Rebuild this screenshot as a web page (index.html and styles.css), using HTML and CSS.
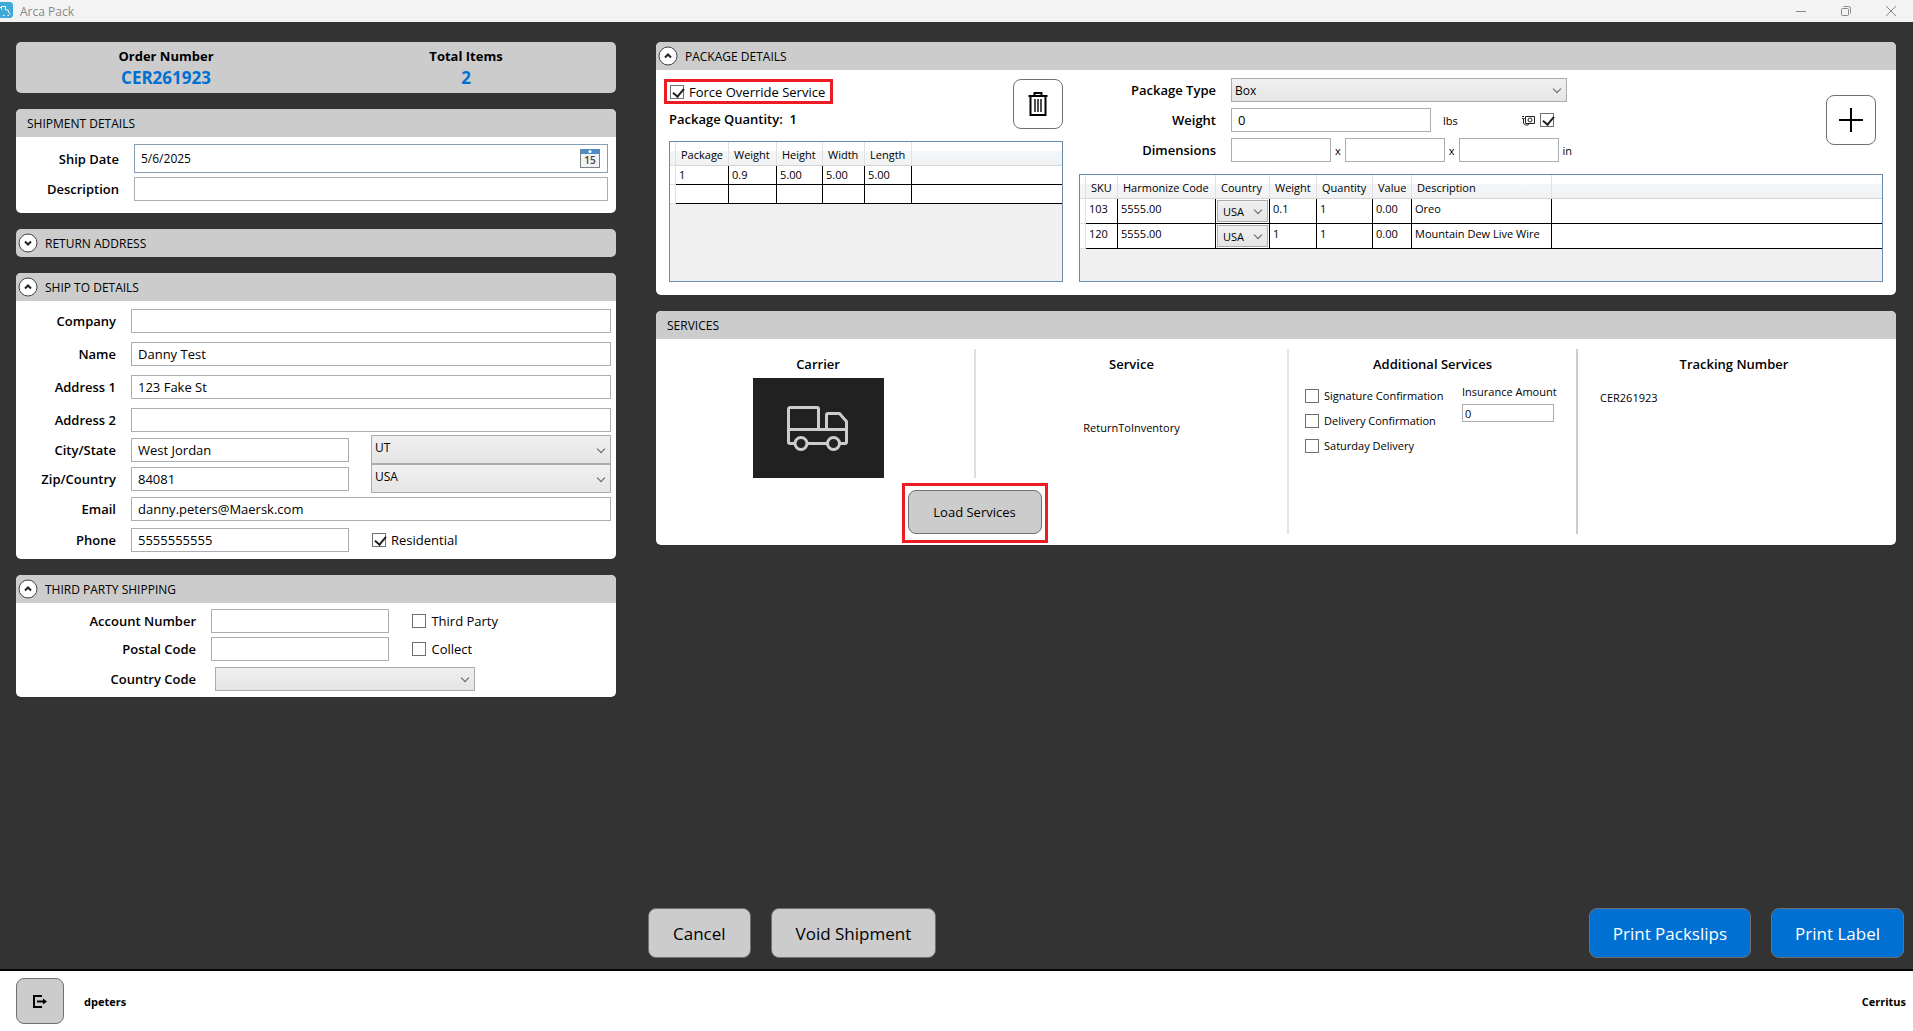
FILE: index.html
```html
<!DOCTYPE html>
<html lang="en">
<head>
  <meta charset="UTF-8" />
  <meta name="viewport" content="width=device-width, initial-scale=1.0"/>
  <title>Arca Pack</title>
  <link rel="stylesheet" href="styles.css">
</head>
<body>
  <!-- Window title bar -->
  <header class="titlebar">
    <svg class="app-icon" viewBox="0 0 13 16" width="13" height="16">
      <path d="M0 0h11l2 2v12l-2 2H0z" fill="#3fa9d8"/>
      <path d="M0 5.500h1.500M1.500 7.500v-3h4v2.500M5 7.500l3.500 1M8.500 8.500v1.500l2 2.500" fill="none" stroke="#fff"/>
      <path d="M3 13.500h1.500M7.500 13.500h1.500" stroke="#fff"/>
    </svg>
    <span class="titlebar-name">Arca Pack</span>
    <button class="win-btn" aria-label="Minimize"><svg viewBox="0 0 12 12" width="12" height="12"><path d="M1 6.500h10"/></svg></button>
    <button class="win-btn" aria-label="Restore"><svg viewBox="0 0 12 12" width="12" height="12"><rect x="1.500" y="3.500" width="7" height="7" rx="1"/><path d="M3.500 1.500h5a2 2 0 0 1 2 2v5"/></svg></button>
    <button class="win-btn" aria-label="Close"><svg viewBox="0 0 12 12" width="12" height="12"><path d="M1 1l10 10M11 1L1 11"/></svg></button>
  </header>

  <main>
    <div class="columns">
      <!-- Left column -->
      <div class="column">
        <section class="summary">
          <div>
            <h2>Order Number</h2>
            <p>CER261923</p>
          </div>
          <div>
            <h2>Total Items</h2>
            <p>2</p>
          </div>
        </section>

        <section class="panel">
          <h2 class="panel-head">SHIPMENT DETAILS</h2>
          <div class="panel-body shipment">
            <div class="field">
              <label for="shipDate">Ship Date</label>
              <div class="date-box">
                <input type="text" id="shipDate" value="5/6/2025">
                <button aria-label="Open calendar">
                  <svg viewBox="0 0 20 19" width="20" height="19">
                    <rect x=".5" y=".5" width="19" height="18" fill="#f1f2f4" stroke="#7c7f85"/>
                    <rect x="1" y="0" width="18" height="5" fill="#4c8cc4"/>
                    <circle cx="10" cy="2.500" r="1.500" fill="#fff"/>
                    <text x="10" y="15" text-anchor="middle" class="cal-day">15</text>
                  </svg>
                </button>
              </div>
            </div>
            <div class="field">
              <label for="description">Description</label>
              <input type="text" id="description">
            </div>
          </div>
        </section>

        <section class="panel">
          <h2 class="panel-head">
            <button class="toggle" aria-label="Expand"><svg viewBox="0 0 20 20" width="20" height="20"><circle cx="10" cy="10" r="9"/><path d="M7 8.500l3 3 3-3"/></svg></button>
            RETURN ADDRESS
          </h2>
        </section>

        <section class="panel">
          <h2 class="panel-head">
            <button class="toggle" aria-label="Collapse"><svg viewBox="0 0 20 20" width="20" height="20"><circle cx="10" cy="10" r="9"/><path d="M7 11.500l3-3 3 3"/></svg></button>
            SHIP TO DETAILS
          </h2>
          <div class="panel-body ship-to">
            <div class="rows">
              <div class="field"><label for="company">Company</label><input type="text" id="company"></div>
              <div class="field"><label for="name">Name</label><input type="text" id="name" value="Danny Test"></div>
              <div class="field"><label for="address1">Address 1</label><input type="text" id="address1" value="123 Fake St"></div>
              <div class="field"><label for="address2">Address 2</label><input type="text" id="address2"></div>
            </div>
            <div class="rows-tight">
              <div class="field">
                <label for="city">City/State</label>
                <div class="split">
                  <input type="text" id="city" value="West Jordan">
                  <div class="select"><select aria-label="State"><option>UT</option></select></div>
                </div>
              </div>
              <div class="field">
                <label for="zip">Zip/Country</label>
                <div class="split">
                  <input type="text" id="zip" value="84081">
                  <div class="select"><select aria-label="Country"><option>USA</option></select></div>
                </div>
              </div>
            </div>
            <div class="rows-contact">
              <div class="field"><label for="email">Email</label><input type="text" id="email" value="danny.peters@Maersk.com"></div>
              <div class="field">
                <label for="phone">Phone</label>
                <div class="split">
                  <input type="text" id="phone" value="5555555555">
                  <label class="check"><input type="checkbox" checked> Residential</label>
                </div>
              </div>
            </div>
          </div>
        </section>

        <section class="panel">
          <h2 class="panel-head">
            <button class="toggle" aria-label="Collapse"><svg viewBox="0 0 20 20" width="20" height="20"><circle cx="10" cy="10" r="9"/><path d="M7 11.500l3-3 3 3"/></svg></button>
            THIRD PARTY SHIPPING
          </h2>
          <div class="panel-body third-party">
            <div class="field">
              <label for="account">Account Number</label>
              <div class="split">
                <input type="text" id="account">
                <label class="check"><input type="checkbox"> Third Party</label>
              </div>
            </div>
            <div class="field">
              <label for="postal">Postal Code</label>
              <div class="split">
                <input type="text" id="postal">
                <label class="check"><input type="checkbox"> Collect</label>
              </div>
            </div>
            <div class="field">
              <label for="countryCode">Country Code</label>
              <div class="select country-code"><select id="countryCode"><option></option></select></div>
            </div>
          </div>
        </section>
      </div>

      <!-- Right column -->
      <div class="column">
        <section class="panel">
          <h2 class="panel-head">
            <button class="toggle" aria-label="Collapse"><svg viewBox="0 0 20 20" width="20" height="20"><circle cx="10" cy="10" r="9"/><path d="M7 11.500l3-3 3 3"/></svg></button>
            PACKAGE DETAILS
          </h2>
          <div class="panel-body package">
            <div class="package-list">
              <div class="package-top">
                <div>
                  <label class="check highlight"><input type="checkbox" checked> Force Override Service</label>
                  <p class="quantity">Package Quantity:&nbsp; 1</p>
                </div>
                <button class="icon-btn" aria-label="Delete package">
                  <svg viewBox="0 0 22 26" width="22" height="26">
                    <path d="M1.500 5h19M7.500 5V2h7v3M3.500 5v19h15V5" fill="none" stroke="#000" stroke-width="2"/>
                    <path d="M8 8v13M11 8v13M14 8v13" fill="none" stroke="#000" stroke-width="1.400"/>
                  </svg>
                </button>
              </div>
              <div class="grid-box">
                <table>
                  <colgroup><col class="w6"><col class="w53"><col class="w48"><col class="w46"><col class="w42"><col class="w47"><col></colgroup>
                  <thead>
                    <tr><th class="edge"></th><th>Package</th><th>Weight</th><th>Height</th><th>Width</th><th>Length</th><th></th></tr>
                  </thead>
                  <tbody>
                    <tr><td class="edge"></td><td>1</td><td>0.9</td><td>5.00</td><td>5.00</td><td>5.00</td><td></td></tr>
                    <tr><td class="edge"></td><td></td><td></td><td></td><td></td><td></td><td></td></tr>
                  </tbody>
                </table>
              </div>
            </div>

            <div class="package-form">
              <div class="package-entry">
                <div class="entry-rows">
                  <label for="packageType">Package Type</label>
                  <div class="select package-type"><select id="packageType"><option>Box</option></select></div>
                  <label for="weight">Weight</label>
                  <div class="weight-row">
                    <input type="text" id="weight" value="0">
                    <span class="lbs">lbs</span>
                    <svg viewBox="0 0 13 11" width="13" height="11">
                      <path d="M3.500 1.500h9v7h-9zM0 1.500h2M0 3.500h2.500M1.500 4v4.500l2 1.500h2.500l1-1.500" fill="none" stroke="#222"/>
                      <circle cx="8" cy="5" r="2" fill="none" stroke="#222"/>
                    </svg>
                    <input type="checkbox" checked aria-label="Use scale weight">
                  </div>
                  <label for="dimLength">Dimensions</label>
                  <div class="dim-row">
                    <input type="text" id="dimLength">
                    <span>x</span>
                    <input type="text" aria-label="Width">
                    <span>x</span>
                    <input type="text" aria-label="Height">
                    <span>in</span>
                  </div>
                </div>
                <button class="icon-btn" aria-label="Add package">
                  <svg viewBox="0 0 24 24" width="24" height="24"><path d="M12 0v24M0 12h24" stroke="#000" stroke-width="2"/></svg>
                </button>
              </div>
              <div class="grid-box items">
                <table>
                  <colgroup><col class="w6"><col class="w32"><col class="w98"><col class="w54"><col class="w47"><col class="w56"><col class="w39"><col class="w140"><col></colgroup>
                  <thead>
                    <tr><th class="edge"></th><th>SKU</th><th>Harmonize Code</th><th>Country</th><th>Weight</th><th>Quantity</th><th>Value</th><th>Description</th><th></th></tr>
                  </thead>
                  <tbody>
                    <tr><td class="edge"></td><td>103</td><td>5555.00</td><td class="has-select"><div class="select"><select aria-label="Country for 103"><option>USA</option></select></div></td><td>0.1</td><td>1</td><td>0.00</td><td>Oreo</td><td></td></tr>
                    <tr><td class="edge"></td><td>120</td><td>5555.00</td><td class="has-select"><div class="select"><select aria-label="Country for 120"><option>USA</option></select></div></td><td>1</td><td>1</td><td>0.00</td><td>Mountain Dew Live Wire</td><td></td></tr>
                  </tbody>
                </table>
              </div>
            </div>
          </div>
        </section>

        <section class="panel">
          <h2 class="panel-head">SERVICES</h2>
          <div class="panel-body services">
            <div class="service-col carrier-col">
              <h3>Carrier</h3>
              <div class="carrier">
                <svg viewBox="0 0 62 46" width="62" height="46">
                  <path d="M7 38.500H3a1.500 1.500 0 0 1-1.500-1.500V4A1.500 1.500 0 0 1 3 2.500h27A1.500 1.500 0 0 1 31.500 4v20.500M1.500 24.500h58M20 38.500h20M39.500 24.500V10A1.500 1.500 0 0 1 41 8.500h11.500l7 8V37a1.500 1.500 0 0 1-1.500 1.500h-5"/>
                  <circle cx="14" cy="38.500" r="6"/>
                  <circle cx="46.500" cy="38.500" r="6"/>
                </svg>
              </div>
            </div>
            <div class="service-col no-rule">
              <h3>Service</h3>
              <p class="service-name">ReturnToInventory</p>
            </div>
            <div class="load-row">
              <div class="load-box"><button class="btn-load">Load Services</button></div>
            </div>
            <div class="service-col tall">
              <h3>Additional Services</h3>
              <div class="extras">
                <div class="extra-checks">
                  <label class="check"><input type="checkbox"> Signature Confirmation</label>
                  <label class="check"><input type="checkbox"> Delivery Confirmation</label>
                  <label class="check"><input type="checkbox"> Saturday Delivery</label>
                </div>
                <div class="insurance">
                  <label for="insurance">Insurance Amount</label>
                  <input type="text" id="insurance" value="0">
                </div>
              </div>
            </div>
            <div class="service-col tall no-rule tracking-col">
              <h3>Tracking Number</h3>
              <p class="tracking">CER261923</p>
            </div>
          </div>
        </section>
      </div>
    </div>

    <div class="actions">
      <div class="action-group">
        <button class="btn">Cancel</button>
        <button class="btn">Void Shipment</button>
      </div>
      <div class="action-group">
        <button class="btn btn-blue">Print Packslips</button>
        <button class="btn btn-blue">Print Label</button>
      </div>
    </div>
  </main>

  <footer>
    <button class="logout" aria-label="Log out">
      <svg viewBox="0 0 14 13" width="14" height="13">
        <path d="M9 1H1v11h8M4 6.500h8" fill="none" stroke="#000" stroke-width="2"/>
        <path d="M10 3.500l4 3-4 3z"/>
      </svg>
    </button>
    <span>dpeters</span>
    <span class="site">Cerritus</span>
  </footer>
</body>
</html>
```
FILE: styles.css
```css
* {
  box-sizing: border-box;
}

body {
  margin: 0;
  min-height: 100vh;
  display: flex;
  flex-direction: column;
  font-family: "Open Sans", "Noto Sans", sans-serif;
  font-size: 13px;
  color: #000;
  background: #333;
}

h2, h3, p {
  margin: 0;
}

button, input, select {
  font-family: inherit;
  font-size: inherit;
  color: inherit;
}

button {
  padding: 0;
  display: flex;
  align-items: center;
  justify-content: center;
}

/* Title bar */
.titlebar {
  height: 22px;
  display: flex;
  align-items: center;
  background: #f3f3f3;
  padding-right: 16px;
}

.app-icon {
  margin-bottom: 2px;
}

.titlebar-name {
  flex: 1;
  padding-left: 7px;
  font-size: 12px;
  color: #888;
}

.win-btn {
  width: 12px;
  height: 18px;
  margin-left: 33px;
  border: none;
  background: none;
}

.win-btn svg {
  fill: none;
  stroke: #888;
  stroke-width: 1;
}

/* Page columns */
main {
  flex: 1;
  display: flex;
  flex-direction: column;
  justify-content: space-between;
  padding-top: 20px;
  border-bottom: 2px solid #000;
}

.columns {
  display: grid;
  grid-template-columns: 600fr 1240fr;
  gap: 40px;
  padding: 0 17px 0 16px;
}

.column {
  display: flex;
  flex-direction: column;
  gap: 16px;
  min-width: 0;
}

.summary {
  display: grid;
  grid-template-columns: 1fr 1fr;
  height: 51px;
  padding-top: 4px;
  background: #ccc;
  border-radius: 5px;
  text-align: center;
}

.summary h2 {
  font-size: 13px;
  line-height: 20px;
}

.summary p {
  font-size: 17px;
  font-weight: 700;
  line-height: 23px;
  color: #0070d2;
}

.panel {
  background: #fff;
  border-radius: 5px;
  overflow: hidden;
}

.panel-head {
  display: flex;
  align-items: center;
  height: 28px;
  padding-left: 11px;
  background: #ccc;
  font-size: 12px;
  font-weight: 400;
}

.panel-head:has(.toggle) {
  padding-left: 2px;
}

.toggle {
  margin-right: 7px;
  border: none;
  background: none;
}

.toggle circle {
  fill: #fff;
  stroke: #444;
}

.toggle path {
  fill: none;
  stroke: #222;
  stroke-width: 2;
}

/* Form controls */
input[type="text"] {
  width: 100%;
  min-width: 0;
  height: 24px;
  padding: 0 6px;
  border: 1px solid #abadb3;
  background: #fff;
}

input[type="checkbox"] {
  appearance: none;
  flex: none;
  width: 14px;
  height: 14px;
  margin: 0 5px 0 0;
  border: 1px solid #707070;
  background: #fff;
}

input[type="checkbox"]:checked::after {
  content: "";
  display: block;
  width: 5px;
  height: 9px;
  margin-left: 4px;
  border: solid #212121;
  border-width: 0 2px 2px 0;
  transform: rotate(40deg);
}

.check {
  display: flex;
  align-items: center;
}

.select {
  position: relative;
  min-width: 0;
}

.select::after {
  content: "";
  position: absolute;
  right: 7px;
  top: 50%;
  width: 5px;
  height: 5px;
  margin-top: -4px;
  border: solid #606060;
  border-width: 0 1px 1px 0;
  transform: rotate(45deg);
  pointer-events: none;
}

select {
  appearance: none;
  display: block;
  width: 100%;
  height: 24px;
  padding: 0 3px;
  border: 1px solid #acacac;
  border-radius: 0;
  background: linear-gradient(#f0f0f0, #e5e5e5);
  font-size: 12px;
}

.field {
  display: grid;
  grid-template-columns: 100px 1fr;
  column-gap: 15px;
  align-items: center;
}

.field > label,
.entry-rows > label {
  font-weight: 600;
  text-align: right;
}

.split {
  display: grid;
  grid-template-columns: 218fr 240fr;
  column-gap: 22px;
  align-items: center;
}

.split .check {
  padding-left: 1px;
}

/* Shipment details */
.shipment {
  display: grid;
  gap: 4px;
  padding: 7px 8px 12px 0;
}

.shipment .field {
  grid-template-columns: 103px 1fr;
}

.date-box {
  display: flex;
  align-items: center;
  height: 29px;
  padding-right: 7px;
  border: 1px solid #8a9db0;
}

.date-box input[type="text"] {
  border: none;
  font-size: 12px;
}

.date-box button {
  border: none;
  background: none;
}

.cal-day {
  font-size: 10px;
  font-weight: 600;
  fill: #444;
}

/* Ship to details */
.ship-to {
  padding: 8px 5px 7px 0;
}

.rows {
  display: grid;
  gap: 9px;
}

.rows-tight {
  margin: 3px 0 4px;
}

.rows-contact {
  display: grid;
  gap: 7px;
}

.rows-tight select {
  height: 29px;
  padding-bottom: 5px;
}

/* Third party shipping */
.third-party {
  display: grid;
  gap: 4px;
  padding: 6px 0 6px;
}

.third-party .field {
  grid-template-columns: 180px 1fr;
}

.third-party .split {
  grid-template-columns: 178fr 204fr;
}

.country-code {
  width: 260px;
  margin-left: 4px;
}

.third-party .field:last-child {
  margin-top: 2px;
}

/* Package details */
.package {
  display: grid;
  grid-template-columns: 394fr 804fr;
  gap: 16px;
  padding: 8px 13px 13px;
}

.package-list,
.package-form {
  display: flex;
  flex-direction: column;
  gap: 12px;
  min-width: 0;
}

.package-top {
  display: flex;
  justify-content: space-between;
  padding-top: 1px;
}

.highlight {
  width: max-content;
  height: 25px;
  margin-left: -5px;
  padding: 0 5px 0 3px;
  border: 3px solid #ed1c24;
}

.quantity {
  padding-top: 6px;
  font-weight: 600;
}

.icon-btn {
  width: 50px;
  height: 50px;
  border: 1px solid #707070;
  border-radius: 8px;
  background: #fff;
}

.package-entry {
  display: flex;
  justify-content: space-between;
  align-items: center;
  padding-right: 7px;
}

.entry-rows {
  display: grid;
  grid-template-columns: 137px auto;
  gap: 6px 15px;
  align-items: center;
}

.package-type {
  width: 336px;
}

.weight-row,
.dim-row {
  display: flex;
  align-items: center;
  font-size: 11px;
}

.weight-row input[type="text"] {
  width: 200px;
  font-size: 13px;
}

.weight-row input[type="checkbox"] {
  margin-left: 5px;
}

.lbs {
  width: 91px;
  padding-left: 12px;
}

.dim-row {
  gap: 4px;
}

.dim-row input[type="text"] {
  width: 100px;
}

/* Data grids */
.grid-box {
  flex: 1;
  border: 1px solid #688caf;
  background: #f0f0f0;
}

.items {
  flex: none;
  height: 108px;
}

table {
  width: 100%;
  table-layout: fixed;
  border-spacing: 0;
  font-size: 11px;
}

th {
  height: 24px;
  padding: 1px 0 0 5px;
  border-right: 1px solid #dfe1e3;
  border-bottom: 1px solid #d5d5d5;
  background: linear-gradient(#fff 40%, #f5f6f8 40%, #f0f2f4);
  font-weight: 400;
  text-align: left;
  white-space: nowrap;
}

td {
  height: 19px;
  padding: 0 0 1px 3px;
  border-right: 1px solid #000;
  border-bottom: 1px solid #000;
  background: #fff;
  white-space: nowrap;
}

th:last-child,
td:last-child {
  border-right: none;
}

.edge {
  padding: 0;
  border-color: #e0e0e0;
}

.items td {
  height: 25px;
  padding-bottom: 5px;
}

.items .has-select {
  padding: 1px;
}

.has-select select {
  height: 22px;
  padding: 0 5px;
  font-size: 11px;
}

.w6 { width: 6px; }
.w32 { width: 32px; }
.w39 { width: 39px; }
.w42 { width: 42px; }
.w46 { width: 46px; }
.w47 { width: 47px; }
.w48 { width: 48px; }
.w53 { width: 53px; }
.w54 { width: 54px; }
.w56 { width: 56px; }
.w98 { width: 98px; }
.w140 { width: 140px; }

/* Services */
.services {
  display: grid;
  grid-template-columns: 320fr 311fr 291fr 318fr;
  grid-template-rows: 129px auto;
  row-gap: 5px;
  padding: 10px 0 2px;
  font-size: 11px;
}

.service-col {
  border-right: 2px solid #e0e0e0;
}

.service-col.tall {
  grid-row: 1 / 3;
  margin-bottom: 9px;
  border-color: #ccc;
}

.service-col.no-rule {
  border-right: none;
}

.service-col h3 {
  padding: 5px 0 4px;
  font-size: 13px;
  font-weight: 600;
  line-height: 20px;
  text-align: center;
}

.carrier-col {
  padding-left: 6px;
}

.carrier {
  display: flex;
  align-items: center;
  justify-content: center;
  width: 131px;
  height: 100px;
  margin: 0 auto;
  background: #212121;
}

.carrier svg {
  fill: none;
  stroke: #ccc;
  stroke-width: 3;
}

.service-name {
  line-height: 100px;
  text-align: center;
}

.load-row {
  grid-column: 1 / 3;
  grid-row: 2;
  display: flex;
  justify-content: center;
  padding-left: 6px;
}

.load-box {
  padding: 4px 3px 6px;
  border: 3px solid #ed1c24;
}

.btn-load {
  width: 134px;
  height: 44px;
  border: 1px solid #707070;
  border-radius: 8px;
  background: #ccc;
  font-size: 13px;
}

.service-col.tall:not(.no-rule) {
  border-left: 2px solid #e5e5e5;
}

.extras {
  display: flex;
  gap: 12px;
  padding-left: 16px;
}

.extra-checks {
  display: grid;
  grid-auto-rows: 25px;
  width: 145px;
  padding-top: 5px;
  white-space: nowrap;
}

.insurance {
  padding-top: 6px;
  white-space: nowrap;
}

.insurance label {
  display: block;
  line-height: 16px;
  margin-bottom: 4px;
}

.insurance input[type="text"] {
  display: block;
  width: 92px;
  height: 18px;
  padding: 0 2px;
}

.tracking-col {
  padding-right: 6px;
}

.tracking {
  padding: 12px 0 0 22px;
}

/* Bottom actions */
.actions {
  display: grid;
  grid-template-columns: 1fr auto;
  padding: 0 9px 11px 648px;
}

.action-group {
  display: flex;
  gap: 20px;
}

.btn {
  height: 50px;
  padding: 0 24px;
  border: 1px solid #707070;
  border-radius: 8px;
  background: #ccc;
  font-size: 17px;
}

.btn-blue {
  padding: 0 23px;
  background: #0070d2;
  color: #fff;
}

/* Footer */
footer {
  display: flex;
  align-items: center;
  gap: 20px;
  height: 60px;
  padding: 0 7px 0 16px;
  background: #fff;
  font-size: 11px;
  font-weight: 700;
}

.logout {
  width: 48px;
  height: 46px;
  border: 1px solid #707070;
  border-radius: 8px;
  background: #ccc;
}

.site {
  margin-left: auto;
}
```
